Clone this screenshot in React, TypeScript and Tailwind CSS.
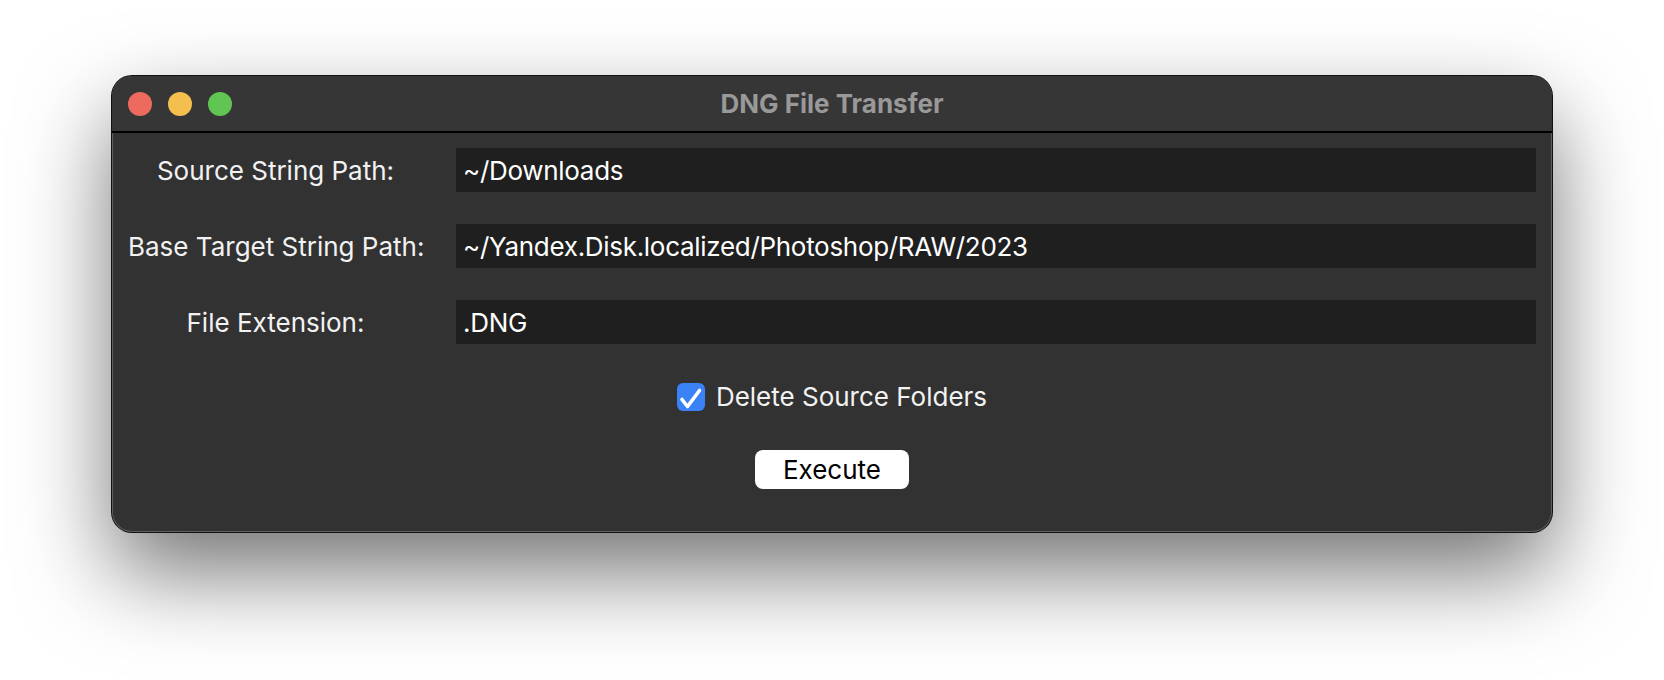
export default function App() {
  const rows = [
    { label: "Source String Path:", value: "~/Downloads" },
    { label: "Base Target String Path:", value: "~/Yandex.Disk.localized/Photoshop/RAW/2023" },
    { label: "File Extension:", value: ".DNG" },
  ];

  return (
    <div className="min-h-screen w-full bg-white flex justify-center pt-[76px] font-['Inter','Liberation_Sans',sans-serif]">
      <div className="w-[1440px] h-[456px] rounded-[20px] bg-[#323232] overflow-hidden flex flex-col shadow-[inset_0_0_0_1px_rgba(255,255,255,0.22),0_0_0_1px_#111,0_40px_90px_rgba(0,0,0,0.55)]">
        {/* title bar */}
        <div className="relative h-[57px] shrink-0 bg-[#363636] border-b-2 border-black flex items-center px-4">
          <div className="flex gap-4">
            <span className="w-6 h-6 rounded-full bg-[#ed6a5e]" />
            <span className="w-6 h-6 rounded-full bg-[#f5bf4f]" />
            <span className="w-6 h-6 rounded-full bg-[#61c554]" />
          </div>
          <div className="absolute inset-0 flex items-center justify-center text-[26px] font-bold text-[#999999]">
            DNG File Transfer
          </div>
        </div>

        {/* form */}
        <div className="flex flex-col gap-8 pt-[15px] pl-4 pr-4">
          {rows.map((row) => (
            <div key={row.label} className="flex items-center gap-[33px]">
              <div className="w-[295px] shrink-0 text-center text-[26px] text-[#f2f2f2] whitespace-nowrap">
                {row.label}
              </div>
              <div className="flex-1 h-[44px] bg-[#1f1f1f] flex items-center pl-[7px] text-[26px] tracking-[-0.3px] text-white whitespace-nowrap">
                {row.value}
              </div>
            </div>
          ))}
        </div>

        <div className="flex justify-center items-center gap-[11px] mt-[39px]">
          <span className="w-7 h-7 rounded-[6px] bg-[#3b82f7]">
            <svg width="28" height="28" viewBox="0 0 28 28" fill="none">
              <path d="M5 16.5l5.5 7L22.5 7.5" stroke="white" strokeWidth="3.6" strokeLinecap="round" strokeLinejoin="round" />
            </svg>
          </span>
          <span className="text-[26px] text-[#f2f2f2] leading-none">Delete Source Folders</span>
        </div>

        <div className="flex justify-center mt-[39px]">
          <button className="w-[154px] h-[39px] rounded-[8px] bg-white text-black text-[26px] leading-none">
            Execute
          </button>
        </div>
      </div>
    </div>
  );
}
